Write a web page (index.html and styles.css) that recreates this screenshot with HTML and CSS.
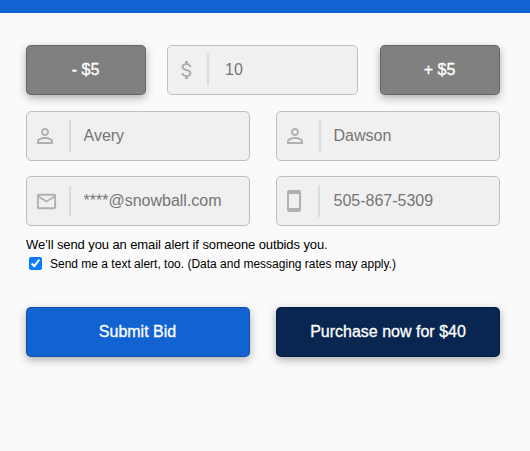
FILE: index.html
```html
<!DOCTYPE html>
<html lang="en">
<head>
    <meta charset="UTF-8">
    <title>Place a Bid</title>
    <link rel="stylesheet" href="styles.css">
</head>
<body>

<header class="topbar"></header>
<form class="bid-form">
    <div class="row amount-row">
        <button type="button" class="btn btn-step">- $5</button>
        <div class="field field-amount">
            <svg class="icon" viewBox="0 0 24 24"><path d="M11.8 10.9c-2.27-.59-3-1.2-3-2.15 0-1.09 1.01-1.85 2.7-1.85 1.78 0 2.44.85 2.5 2.1h2.21c-.07-1.72-1.12-3.3-3.21-3.81V3h-3v2.16c-1.94.42-3.5 1.68-3.5 3.61 0 2.31 1.91 3.46 4.7 4.13 2.5.6 3 1.48 3 2.41 0 .69-.49 1.79-2.7 1.79-2.06 0-2.87-.92-2.98-2.1h-2.2c.12 2.19 1.76 3.42 3.68 3.83V21h3v-2.15c1.95-.37 3.5-1.5 3.5-3.55 0-2.84-2.43-3.81-4.7-4.4z"/></svg>
            <input class="input" type="text" placeholder="10">
        </div>
        <button type="button" class="btn btn-step">+ $5</button>
    </div>
    <div class="row">
        <div class="field">
            <svg class="icon" viewBox="0 0 24 24"><path d="M12 5.9a2.1 2.1 0 1 1 0 4.2 2.1 2.1 0 0 1 0-4.2m0 9c2.97 0 6.1 1.46 6.1 2.1v1.1H5.9V17c0-.64 3.13-2.1 6.1-2.1M12 4C9.79 4 8 5.79 8 8s1.79 4 4 4 4-1.79 4-4-1.79-4-4-4zm0 9c-2.67 0-8 1.34-8 4v3h16v-3c0-2.66-5.33-4-8-4z"/></svg>
            <input class="input" type="text" placeholder="Avery">
        </div>
        <div class="field">
            <svg class="icon" viewBox="0 0 24 24"><path d="M12 5.9a2.1 2.1 0 1 1 0 4.2 2.1 2.1 0 0 1 0-4.2m0 9c2.97 0 6.1 1.46 6.1 2.1v1.1H5.9V17c0-.64 3.13-2.1 6.1-2.1M12 4C9.79 4 8 5.79 8 8s1.79 4 4 4 4-1.79 4-4-1.79-4-4-4zm0 9c-2.67 0-8 1.34-8 4v3h16v-3c0-2.66-5.33-4-8-4z"/></svg>
            <input class="input" type="text" placeholder="Dawson">
        </div>
    </div>
    <div class="row">
        <div class="field field-email">
            <svg class="icon" viewBox="0 0 24 24"><path d="M20 4H4c-1.1 0-1.99.9-1.99 2L2 18c0 1.1.9 2 2 2h16c1.1 0 2-.9 2-2V6c0-1.1-.9-2-2-2zm0 14H4V8l8 5 8-5v10zm-8-7L4 6h16l-8 5z"/></svg>
            <input class="input" type="text" placeholder="****@snowball.com">
        </div>
        <div class="field field-phone">
            <svg class="icon" viewBox="0 0 24 24"><path d="M17 1.01L7 1c-1.1 0-1.99.9-1.99 2v18c0 1.1.89 2 1.99 2h10c1.1 0 2-.9 2-2V3c0-1.1-.9-1.99-2-1.99zM17 19H7V5h10v14z"/></svg>
            <input class="input" type="text" placeholder="505-867-5309">
        </div>
    </div>
    <p class="note">We’ll send you an email alert if someone outbids you.</p>
    <label class="check">
        <input type="checkbox" class="check-box" checked>
        <span>Send me a text alert, too. (Data and messaging rates may apply.)</span>
    </label>
    <div class="row actions">
        <button type="button" class="btn btn-submit">Submit Bid</button>
        <button type="button" class="btn btn-buy">Purchase now for $40</button>
    </div>
</form>

</body>
</html>
```
FILE: styles.css
```css
* {
    box-sizing: border-box;
}
body {
    margin: 0;
    background-color: #fafafa;
    color: #000;
    font-family: Helvetica, "Liberation Sans", Arial, sans-serif;
}
.topbar {
    height: 13px;
    background-color: #1263d2;
}
.bid-form {
    padding: 32px 30px 0 26px;
}
.row {
    display: grid;
    grid-template-columns: 224px 224px;
    column-gap: 26px;
    height: 50px;
    margin-bottom: 16px;
}
.row + .row + .row {
    margin-top: -1px;
    margin-bottom: 0;
}
.amount-row {
    grid-template-columns: 141px 213px 120px;
    column-gap: 0;
}
.btn {
    padding: 0;
    border: 1px solid rgba(0, 0, 0, .2);
    border-radius: 5px;
    color: #fff;
    font-family: inherit;
    font-size: 16px;
    -webkit-text-stroke: .3px #fff;
    box-shadow: 0 3px 8px rgba(0, 0, 0, .3);
}
.btn-step {
    width: 120px;
    padding-right: 1px;
    background-color: #808080;
}
.btn-submit {
    padding-right: 1px;
    background-color: #1263d2;
}
.btn-buy {
    background-color: #082650;
}
.field {
    display: flex;
    align-items: center;
    padding-left: 6px;
    border: 1px solid #bfbfbf;
    border-radius: 5px;
    background-color: #f0f0f0;
}
.icon {
    flex: none;
    width: 24px;
    height: 24px;
    fill: #b0b0b0;
}
.input {
    flex: 1;
    min-width: 0;
    height: 32px;
    margin-left: 12px;
    padding: 0 0 0 12.5px;
    border: 0;
    border-left: 2px solid #dcdcdc;
    outline: none;
    background: none;
    font-family: inherit;
    font-size: 16px;
}
.input::placeholder {
    color: #757575;
}
.field-amount {
    width: 191px;
    padding-left: 7px;
}
.field-amount .input {
    margin-left: 8px;
    padding-left: 16px;
}
.field-email {
    padding-left: 8px;
}
.field-email .icon {
    width: 23px;
    height: 23px;
}
.field-email .input {
    height: 30px;
    margin-left: 11px;
}
.field-phone .icon {
    margin-left: -1px;
}
.field-phone .input {
    margin-left: 12px;
    padding-left: 13.5px;
}
.note {
    margin: 11px 0 0;
    font-size: 13px;
    line-height: 16px;
    letter-spacing: -.1px;
}
.check {
    display: flex;
    align-items: center;
    height: 20px;
    margin-top: 1px;
    font-size: 12px;
}
.check-box {
    width: 13px;
    height: 13px;
    margin: 0 8px 2px 3px;
    accent-color: #0a7aff;
}
.actions {
    margin-top: 33px;
}
```
